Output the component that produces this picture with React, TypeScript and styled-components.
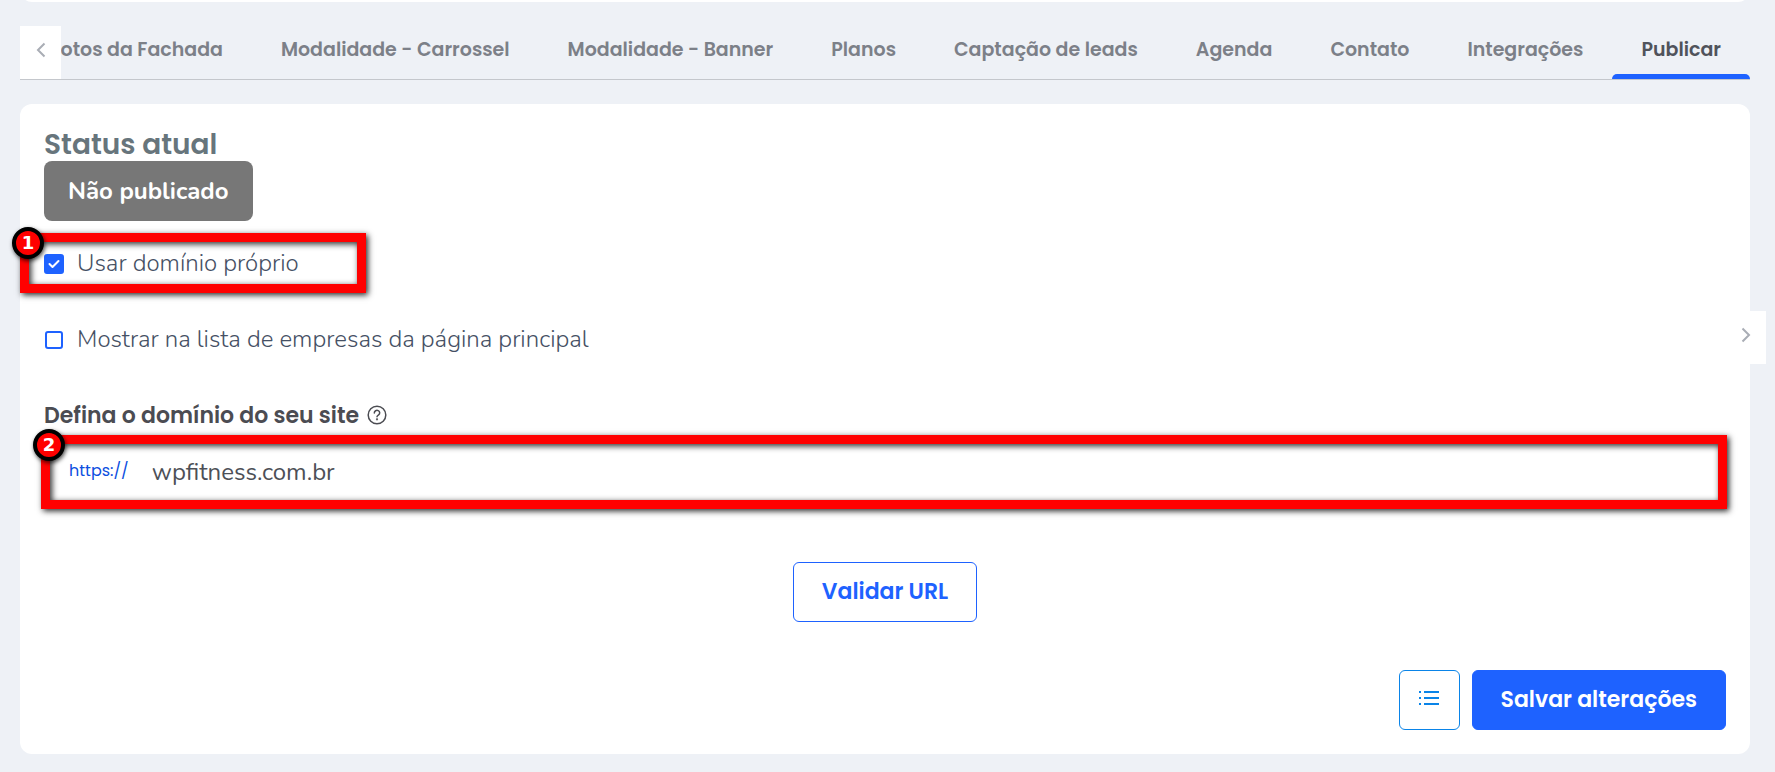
import React, { useState } from "react";
import styled, { createGlobalStyle } from "styled-components";

const heading = `Poppins, Inter, "Liberation Sans", sans-serif`;
const body = `Nunito, "Open Sans", "Liberation Sans", sans-serif`;
const blue = "#1e62ff";
const sky = "#0a84e8";

const GlobalStyle = createGlobalStyle`
  * { box-sizing: border-box; }
  body { margin: 0; background: #eef1f6; font-family: ${body}; }
  button, input { font: inherit; }
`;

const Page = styled.div`
  position: relative;
  min-height: 100vh;
  padding: 0 25px 18px 20px;
  overflow: hidden;
`;

const PreviousCard = styled.div`
  height: 12px;
  margin-top: -10px;
  border-radius: 0 0 12px 12px;
  background: #fff;
`;

const TabBar = styled.nav`
  display: flex;
  height: 54px;
  margin: 24px 0;
  border-bottom: 1px solid #c4c7cc;
`;

const ArrowButton = styled.button`
  display: flex;
  flex: none;
  align-items: center;
  justify-content: center;
  width: 41px;
  height: 53px;
  padding: 0 0 6px;
  border: 0;
  background: #fff;
  color: #a9adb5;
  cursor: pointer;
`;

const NextButton = styled(ArrowButton)`
  position: absolute;
  top: 311px;
  right: 9px;
`;

const TabStrip = styled.div`
  display: flex;
  flex: 1;
  justify-content: flex-end;
  min-width: 0;
  overflow: hidden;
`;

const Tab = styled.a<{ $active?: boolean }>`
  display: flex;
  flex: none;
  flex-direction: column;
  justify-content: space-between;
  color: ${(p) => (p.$active ? "#50535b" : "#7c8088")};
  font: 600 19px/48px ${heading};
  text-decoration: none;
  white-space: nowrap;

  span { padding: 0 29px; }

  &::after {
    content: "";
    height: 5px;
    border-radius: 5px 5px 0 0;
    background: ${(p) => (p.$active ? blue : "transparent")};
  }
`;

const Card = styled.main`
  display: flex;
  flex-direction: column;
  align-items: stretch;
  padding: 24px;
  border-radius: 12px;
  background: #fff;
`;

const Title = styled.h1`
  margin: 0;
  color: #67757c;
  font: 600 28px/33px ${heading};
`;

const StatusBadge = styled.span`
  align-self: flex-start;
  padding: 0 24px;
  border-radius: 8px;
  background: #777;
  color: #fff;
  font-size: 24px;
  font-weight: 700;
  line-height: 60px;
`;

const Option = styled.div`
  position: relative;
  display: flex;
  align-items: center;
  height: 44px;
  margin-top: 32px;

  &:first-of-type { margin-top: 21px; }
`;

const OptionLabel = styled.label`
  display: flex;
  align-items: center;
  gap: 13px;
  color: #455064;
  font-size: 24px;
  font-weight: 300;
  line-height: 32px;
  cursor: pointer;
`;

const OptionText = styled.span`
  padding-bottom: 2px;
`;

const Checkbox = styled.input`
  appearance: none;
  width: 18px;
  height: 18px;
  margin: 1px;
  border: 2px solid ${blue};
  border-radius: 3px;
  background: #fff;

  &:checked {
    width: 20px;
    height: 20px;
    margin: 0;
    background: ${blue};
  }
`;

const CheckHolder = styled.span`
  display: grid;
  place-items: center;
  width: 20px;
  height: 20px;

  > * { grid-area: 1 / 1; }
  svg { z-index: 1; pointer-events: none; }
`;

const FieldHead = styled.div`
  display: flex;
  align-items: center;
  gap: 8px;
  height: 32px;
  margin-top: 38px;
`;

const FieldLabel = styled.label`
  color: #4b4c52;
  font: 600 22px/32px ${heading};
`;

const HelpButton = styled.button`
  display: flex;
  padding: 0 0 2px;
  border: 0;
  background: none;
  color: #4b4c52;
`;

const UrlField = styled.div`
  position: relative;
  display: flex;
  align-items: center;
  height: 60px;
  margin-top: 10px;
  padding: 0 25px;
  gap: 23px;
`;

const Prefix = styled.span`
  padding-bottom: 2px;
  color: #0d4fe0;
  font: 400 16px/24px ${heading};
`;

const UrlInput = styled.input`
  flex: 1;
  min-width: 0;
  padding: 0;
  border: 0;
  outline: 0;
  background: none;
  color: #4d5057;
  font-size: 24px;
`;

const Highlight = styled.div`
  position: absolute;
  border: 9px solid #f00;
  box-shadow: 2px 2px 6px rgba(0, 0, 0, 0.85), inset 2px 2px 6px rgba(0, 0, 0, 0.85);
  pointer-events: none;
`;

const OptionHighlight = styled(Highlight)`
  inset: -9px auto -7px -24px;
  width: 346px;
`;

const FieldHighlight = styled(Highlight)`
  inset: -7px -1px -7px -3px;
`;

const Marker = styled.span`
  position: absolute;
  top: -15px;
  left: -17px;
  width: 32px;
  height: 32px;
  border: 4px solid #000;
  border-radius: 50%;
  background: #f00;
  box-shadow: 1px 2px 4px rgba(0, 0, 0, 0.7);
  color: #fff;
  font: 700 18px/24px "DejaVu Sans", sans-serif;
  text-align: center;
`;

const Button = styled.button<{ $solid?: boolean }>`
  height: 60px;
  padding: 0 28px;
  border: 1px solid ${blue};
  border-radius: 6px;
  background: ${(p) => (p.$solid ? blue : "#fff")};
  color: ${(p) => (p.$solid ? "#fff" : blue)};
  font: 600 22px/28px ${heading};
  cursor: pointer;
`;

const IconButton = styled(Button)`
  display: flex;
  align-items: center;
  justify-content: center;
  width: 61px;
  padding: 0 0 4px;
  border-color: ${sky};
  color: ${sky};
`;

const ValidateRow = styled.div`
  display: flex;
  justify-content: center;
  margin-top: 60px;
`;

const Actions = styled.div`
  display: flex;
  justify-content: flex-end;
  gap: 12px;
  margin-top: 48px;
`;

const tabs = [
  "Fotos da Fachada",
  "Modalidade - Carrossel",
  "Modalidade - Banner",
  "Planos",
  "Captação de leads",
  "Agenda",
  "Contato",
  "Integrações",
  "Publicar",
];

function Chevron({ next }: { next?: boolean }) {
  return (
    <svg width="10" height="16" viewBox="0 0 10 16" fill="none" stroke="currentColor" strokeWidth="2" aria-hidden="true">
      <path d={next ? "M1.5 1.5 8 8l-6.5 6.5" : "M8.5 1.5 2 8l6.5 6.5"} />
    </svg>
  );
}

function CheckOption({ id, label, initial, children }: { id: string; label: string; initial: boolean; children?: React.ReactNode }) {
  const [checked, setChecked] = useState(initial);
  return (
    <Option>
      <OptionLabel htmlFor={id}>
        <CheckHolder>
          <Checkbox id={id} type="checkbox" checked={checked} onChange={(e) => setChecked(e.target.checked)} />
          {checked && (
            <svg width="12" height="10" viewBox="0 0 12 10" fill="none" stroke="#fff" strokeWidth="2" strokeLinecap="round" strokeLinejoin="round">
              <path d="M1.5 5 4.5 8 10.5 2" />
            </svg>
          )}
        </CheckHolder>
        <OptionText>{label}</OptionText>
      </OptionLabel>
      {children}
    </Option>
  );
}

export default function App() {
  const [url, setUrl] = useState("wpfitness.com.br");
  return (
    <Page>
      <GlobalStyle />
      <PreviousCard />
      <TabBar>
        <ArrowButton type="button" aria-label="Anterior"><Chevron /></ArrowButton>
        <TabStrip>
          {tabs.map((tab) => (
            <Tab key={tab} href="#" $active={tab === "Publicar"}><span>{tab}</span></Tab>
          ))}
        </TabStrip>
      </TabBar>
      <Card>
        <Title>Status atual</Title>
        <StatusBadge>Não publicado</StatusBadge>
        <CheckOption id="own-domain" label="Usar domínio próprio" initial>
          <OptionHighlight><Marker>1</Marker></OptionHighlight>
        </CheckOption>
        <CheckOption id="show-listed" label="Mostrar na lista de empresas da página principal" initial={false} />
        <FieldHead>
          <FieldLabel htmlFor="domain">Defina o domínio do seu site</FieldLabel>
          <HelpButton type="button" aria-label="Ajuda">
            <svg width="20" height="20" viewBox="0 0 20 20" fill="none" stroke="currentColor" strokeWidth="1.5" strokeLinecap="round">
              <circle cx="10" cy="10" r="8.8" />
              <path d="M7.3 7.9a2.7 2.5 0 1 1 4.3 2c-1 .7-1.6 1-1.6 1.9" />
              <circle cx="10" cy="14.3" r=".4" fill="currentColor" />
            </svg>
          </HelpButton>
        </FieldHead>
        <UrlField>
          <Prefix>https://</Prefix>
          <UrlInput id="domain" value={url} onChange={(e) => setUrl(e.target.value)} />
          <FieldHighlight><Marker>2</Marker></FieldHighlight>
        </UrlField>
        <ValidateRow>
          <Button type="button">Validar URL</Button>
        </ValidateRow>
        <Actions>
          <IconButton type="button" aria-label="Lista">
            <svg width="20" height="14" viewBox="0 0 20 14" fill="currentColor">
              <path d="M0 0h2v2H0zM5 0h15v2H5zM0 6h2v2H0zM5 6h15v2H5zM0 12h2v2H0zM5 12h15v2H5z" />
            </svg>
          </IconButton>
          <Button type="submit" $solid>Salvar alterações</Button>
        </Actions>
      </Card>
      <NextButton type="button" aria-label="Próximo"><Chevron next /></NextButton>
    </Page>
  );
}
